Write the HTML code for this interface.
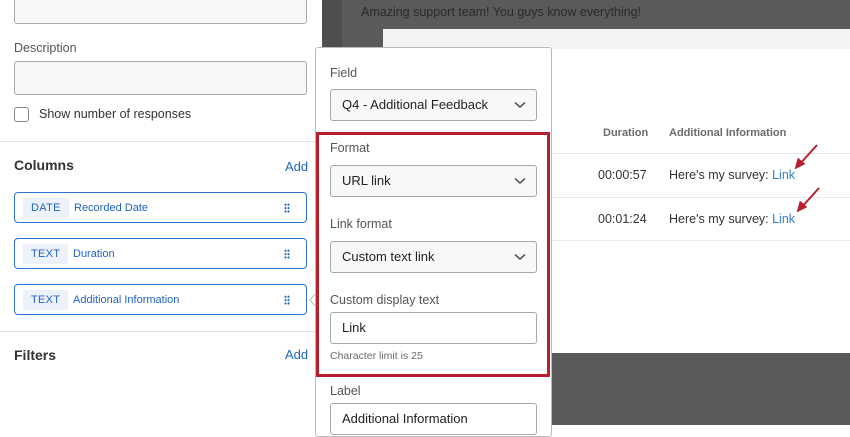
<!DOCTYPE html>
<html><head><meta charset="utf-8"><style>
*{box-sizing:border-box;margin:0;padding:0}
body{width:850px;height:425px;overflow:hidden;position:relative;background:#fff;font-family:"Liberation Sans",sans-serif;color:#333}
.a{position:absolute}
.lbl{font-size:12.5px;color:#555}
.inp{position:absolute;border:1px solid #a8a8a8;border-radius:3px;background:#f8f8f8}
.col{position:absolute;left:14px;width:293px;height:31px;border:1px solid #2a73d0;border-radius:4px;background:#fff}
.tag{position:absolute;left:8px;top:5px;height:20px;padding:0 8px;background:#edf2fa;color:#1f63c4;font-size:11px;line-height:20px;letter-spacing:.3px}
.cn{position:absolute;top:5px;line-height:20px;color:#1f63c4;font-size:11px}
.grip{position:absolute;right:16px;top:10px;width:6px;height:10px;background:radial-gradient(circle,#1f63c4 0.9px,transparent 1.2px) 0 0/3px 3.4px}
.sel{position:absolute;left:14px;width:207px;height:32px;border:1px solid #a8a8a8;border-radius:3px;background:#f8f8f8;font-size:13px;color:#222;line-height:30px;padding-left:11px}
.sel svg{position:absolute;right:10px;top:11px}
.pl{position:absolute;left:14px;font-size:12.5px;color:#555}
.row{position:absolute;font-size:12.5px;color:#333}
</style></head><body>
<!-- dark backdrop -->
<div class="a" style="left:322px;top:0;width:528px;height:425px;background:#5a5a5a"></div>
<div class="a" style="left:322px;top:0;width:20px;height:425px;background:#4f4f4f"></div>
<div class="a" style="left:361px;top:5px;font-size:12.5px;color:#2a2a2a">Amazing support team! You guys know everything!</div>
<div class="a" style="left:383px;top:29px;width:467px;height:324px;background:#fff"></div>
<div class="a" style="left:383px;top:29px;width:467px;height:20px;background:#f4f4f6"></div>
<div class="a" style="left:545px;top:153px;width:305px;height:1px;background:#e6e6e6"></div>
<div class="a" style="left:545px;top:197px;width:305px;height:1px;background:#ececec"></div>
<div class="a" style="left:545px;top:240px;width:305px;height:1px;background:#ececec"></div>
<div class="a" style="left:603px;top:127px;font-size:11px;font-weight:bold;color:#6b6b6b">Duration</div>
<div class="a" style="left:669px;top:127px;font-size:11px;font-weight:bold;color:#6b6b6b">Additional Information</div>
<div class="row" style="left:598px;top:168px">00:00:57</div>
<div class="row" style="left:669px;top:168px">Here's my survey: <span style="color:#2f7fc9">Link</span></div>
<div class="row" style="left:598px;top:212px">00:01:24</div>
<div class="row" style="left:669px;top:212px">Here's my survey: <span style="color:#2f7fc9">Link</span></div>
<svg class="a" style="left:780px;top:130px" width="60" height="100">
<g stroke="#b5202c" stroke-width="2" fill="#b5202c">
<line x1="37" y1="15" x2="19" y2="35"/><polygon points="15,39 18,28 25,34" stroke-width="0.5"/>
<line x1="39" y1="58" x2="21" y2="78"/><polygon points="17,82 20,71 27,77" stroke-width="0.5"/>
</g></svg>
<!-- left panel -->
<div class="a" style="left:0;top:0;width:322px;height:425px;background:#fff"></div>
<div class="inp" style="left:14px;top:-6px;width:293px;height:30px"></div>
<div class="a lbl" style="left:14px;top:41px">Description</div>
<div class="inp" style="left:14px;top:61px;width:293px;height:34px"></div>
<div class="a" style="left:14px;top:107px;width:15px;height:15px;border:1px solid #888;border-radius:3px"></div>
<div class="a" style="left:39px;top:107px;font-size:12.5px;color:#333">Show number of responses</div>
<div class="a" style="left:0;top:141px;width:315px;height:1px;background:#e4e4e4"></div>
<div class="a" style="left:14px;top:157px;font-size:14px;font-weight:bold;color:#333">Columns</div>
<div class="a" style="left:285px;top:159px;font-size:13px;color:#1f63c4">Add</div>
<div class="col" style="top:192px"><div class="tag">DATE</div><div class="cn" style="left:59px">Recorded Date</div><div class="grip"></div></div>
<div class="col" style="top:238px"><div class="tag">TEXT</div><div class="cn" style="left:58px">Duration</div><div class="grip"></div></div>
<div class="col" style="top:284px"><div class="tag">TEXT</div><div class="cn" style="left:58px">Additional Information</div><div class="grip"></div></div>
<div class="a" style="left:0;top:331px;width:315px;height:1px;background:#e4e4e4"></div>
<div class="a" style="left:14px;top:347px;font-size:14px;font-weight:bold;color:#333">Filters</div>
<div class="a" style="left:285px;top:347px;font-size:13px;color:#1f63c4">Add</div>
<!-- popup -->
<div class="a" style="left:315px;top:47px;width:237px;height:390px;background:#fff;border:1px solid #bbb;border-radius:3px">
<div class="pl" style="top:18px">Field</div>
<div class="sel" style="top:41px">Q4 - Additional Feedback<svg width="12" height="8"><path d="M1 1.5 L6 6 L11 1.5" stroke="#444" stroke-width="1.4" fill="none"/></svg></div>
<div class="pl" style="top:93px">Format</div>
<div class="sel" style="top:117px">URL link<svg width="12" height="8"><path d="M1 1.5 L6 6 L11 1.5" stroke="#444" stroke-width="1.4" fill="none"/></svg></div>
<div class="pl" style="top:169px">Link format</div>
<div class="sel" style="top:193px">Custom text link<svg width="12" height="8"><path d="M1 1.5 L6 6 L11 1.5" stroke="#444" stroke-width="1.4" fill="none"/></svg></div>
<div class="pl" style="top:245px">Custom display text</div>
<div class="sel" style="top:264px;background:#fff">Link</div>
<div class="pl" style="top:302px;font-size:10.5px;color:#6b6b6b">Character limit is 25</div>
<div class="pl" style="top:336px">Label</div>
<div class="sel" style="top:355px;background:#fff">Additional Information</div>
</div>
<div class="a" style="left:316px;top:132px;width:234px;height:245px;border:3px solid #b5202c"></div>
<svg class="a" style="left:309px;top:293px" width="8" height="14"><path d="M6 1 L1 7 L6 13" stroke="#bbb" fill="#fff"/></svg>
</body></html>
